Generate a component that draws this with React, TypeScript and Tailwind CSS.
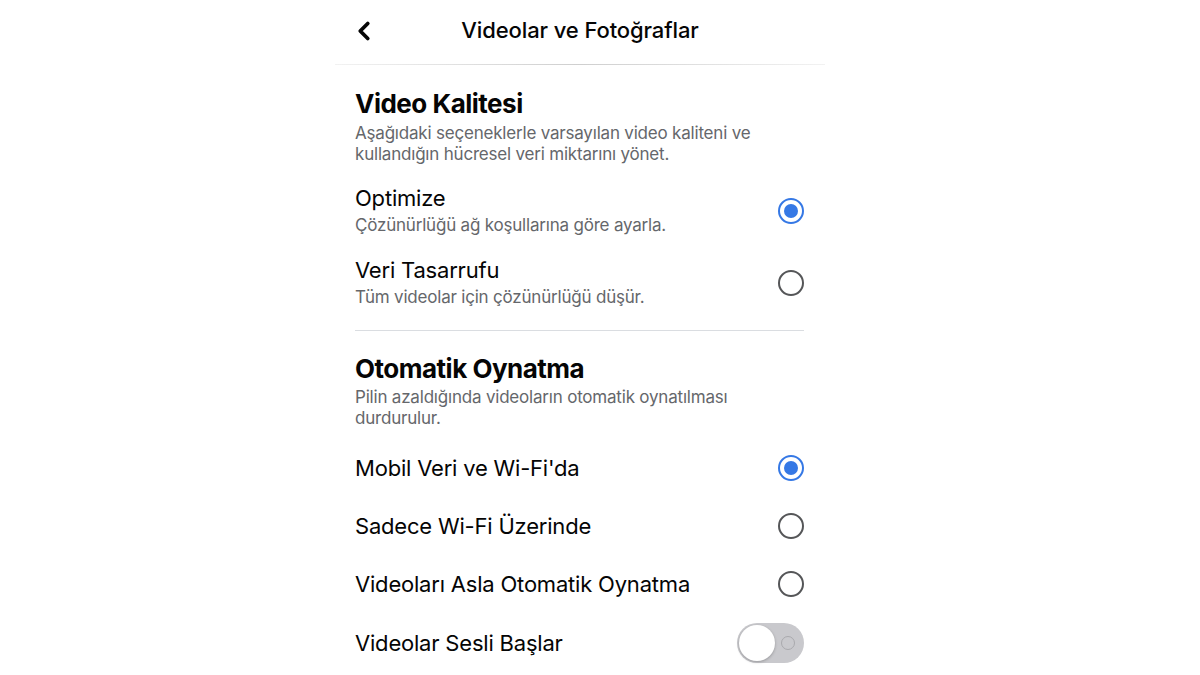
import { ChevronLeft } from 'lucide-react';

type Opt = { title: string; sub?: string; selected?: boolean };

const quality: Opt[] = [
    { title: 'Optimize', sub: 'Çözünürlüğü ağ koşullarına göre ayarla.', selected: true },
    { title: 'Veri Tasarrufu', sub: 'Tüm videolar için çözünürlüğü düşür.' },
];

const autoplay: Opt[] = [
    { title: "Mobil Veri ve Wi-Fi'da", selected: true },
    { title: 'Sadece Wi-Fi Üzerinde' },
    { title: 'Videoları Asla Otomatik Oynatma' },
];

function Radio({ on }: { on?: boolean }) {
    return on ? (
        <div className="w-[26px] h-[26px] rounded-full border-2 border-[#3578e5] flex items-center justify-center">
            <div className="w-[14px] h-[14px] rounded-full bg-[#3578e5]" />
        </div>
    ) : (
        <div className="w-[26px] h-[26px] rounded-full border-2 border-[#555658]" />
    );
}

export default function App() {
    return (
        <div className="min-h-[675px] bg-white pl-[335px] font-['Inter','Liberation_Sans',sans-serif] text-[#050505]">
            <div className="w-[490px]">
                {/* header */}
                <div className="h-[65px] relative flex items-center justify-center">
                    <ChevronLeft className="absolute left-[14px] top-[16px] w-[30px] h-[30px]" strokeWidth={3} />
                    <h1 className="text-[22px] font-medium tracking-[-0.1px] -mt-[4px]">Videolar ve Fotoğraflar</h1>
                    <div className="absolute left-0 right-0 bottom-0 h-px bg-gradient-to-r from-[#f2f2f2] via-[#cfcfcf] to-[#f2f2f2]" />
                </div>

                <div className="pl-[20px] pr-[21px]">
                    <h2 className="text-[26px] font-bold leading-[34px] mt-[22px] tracking-[-0.5px]">Video Kalitesi</h2>
                    <p className="text-[17px] leading-[21px] tracking-[-0.2px] text-[#65676b] mt-[2px]">
                        Aşağıdaki seçeneklerle varsayılan video kaliteni ve kullandığın hücresel veri miktarını yönet.
                    </p>

                    <div className="mt-[19px] flex flex-col gap-[18px]">
                        {quality.map((o) => (
                            <div key={o.title} className="flex items-center justify-between">
                                <div>
                                    <div className="text-[22px] leading-[28px] tracking-[-0.2px]">{o.title}</div>
                                    <div className="text-[17px] leading-[26px] tracking-[-0.2px] text-[#65676b]">{o.sub}</div>
                                </div>
                                <Radio on={o.selected} />
                            </div>
                        ))}
                    </div>

                    <div className="h-px bg-[#dadde1] mt-[20px]" />

                    <h2 className="text-[26px] font-bold leading-[34px] mt-[21px] tracking-[-0.5px]">Otomatik Oynatma</h2>
                    <p className="text-[17px] leading-[21px] tracking-[-0.2px] text-[#65676b] mt-[1px] pr-[60px]">
                        Pilin azaldığında videoların otomatik oynatılması durdurulur.
                    </p>

                    <div className="mt-[10px] flex flex-col">
                        {autoplay.map((o) => (
                            <div key={o.title} className="h-[58px] flex items-center justify-between">
                                <span className="text-[22px] tracking-[-0.2px]">{o.title}</span>
                                <Radio on={o.selected} />
                            </div>
                        ))}
                        <div className="h-[60px] flex items-center justify-between">
                            <span className="text-[22px] tracking-[-0.2px]">Videolar Sesli Başlar</span>
                            <div className="relative w-[67px] h-[40px] rounded-full bg-[#c9c9cd]">
                                <div className="absolute left-[2px] top-[2px] w-[36px] h-[36px] rounded-full bg-white shadow-[0_1px_3px_rgba(0,0,0,0.25)]" />
                                <div className="absolute right-[9px] top-[13px] w-[14px] h-[14px] rounded-full border-[1.5px] border-[#a9a9ad]" />
                            </div>
                        </div>
                    </div>
                </div>
            </div>
        </div>
    );
}
